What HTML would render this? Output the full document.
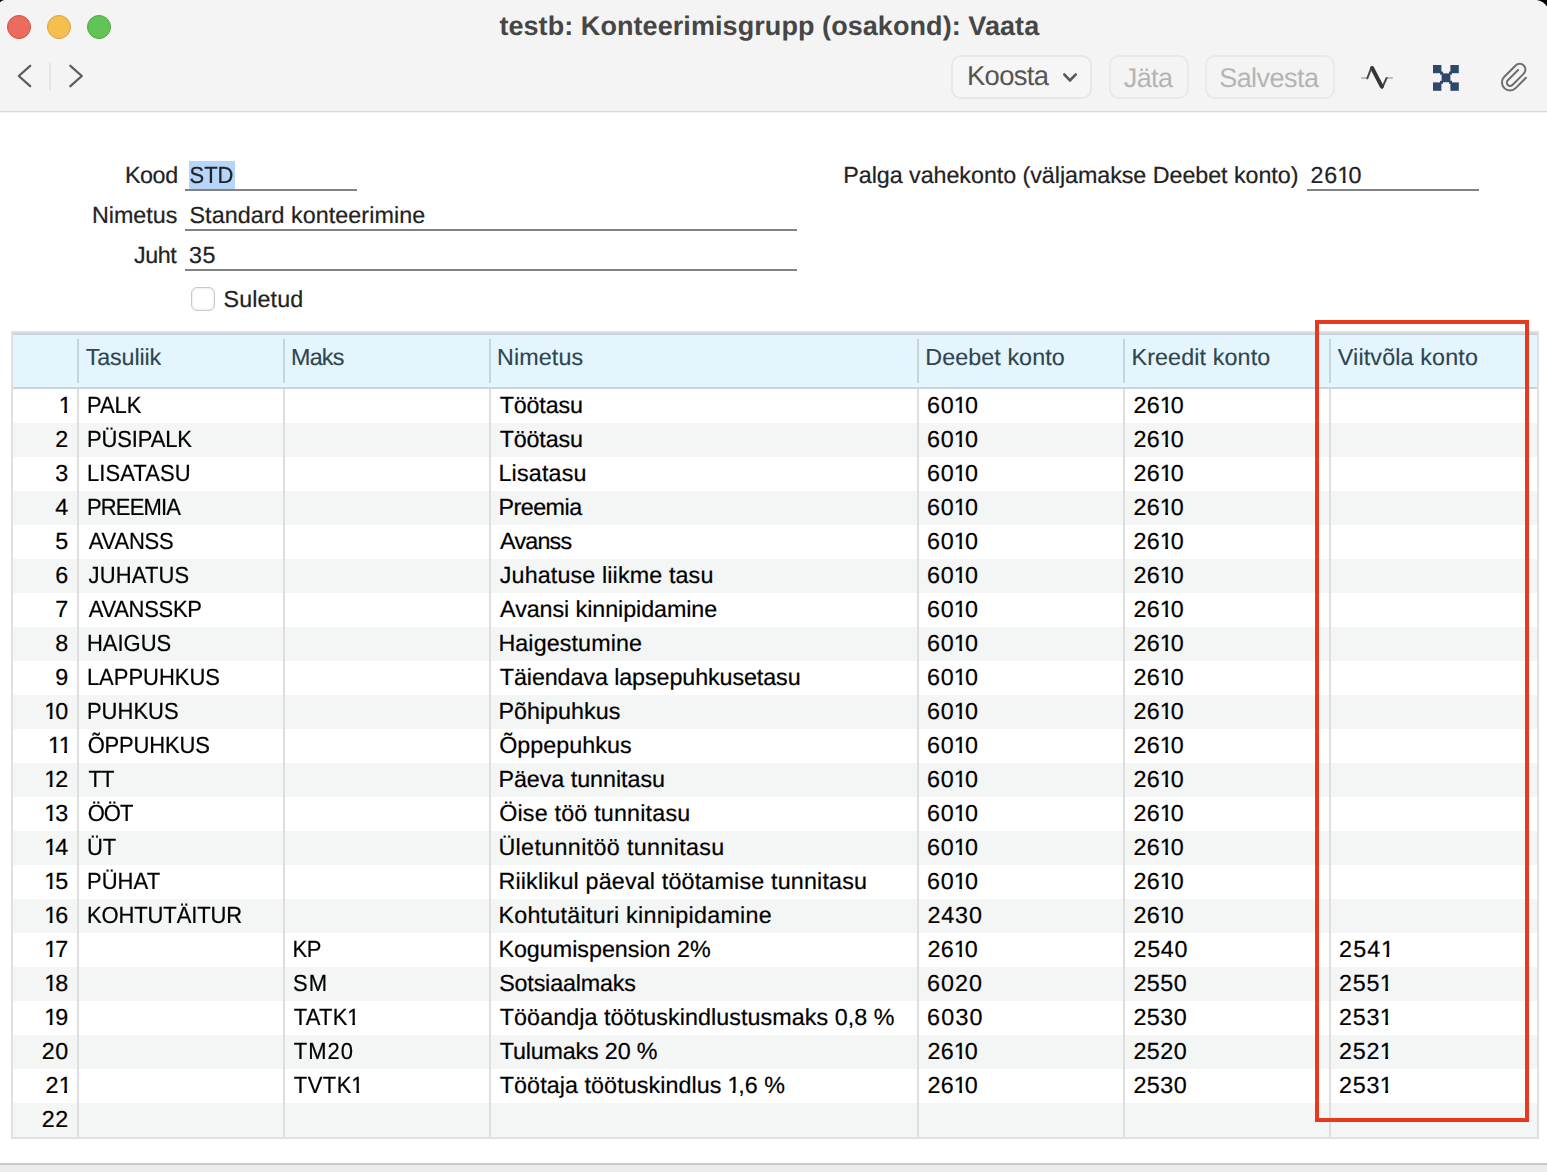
<!DOCTYPE html>
<html><head><meta charset="utf-8"><title>testb: Konteerimisgrupp (osakond): Vaata</title>
<style>
html,body{margin:0;padding:0;}
body{width:1547px;height:1172px;overflow:hidden;background:#fff;position:relative;font-family:"Liberation Sans",sans-serif;color:#000;text-rendering:geometricPrecision;}
div,span{box-sizing:border-box;}
.abs{position:absolute;}
.titlebar{position:absolute;left:0;top:0;width:1547px;height:111px;background:#f4f4f4;}
.tbline{position:absolute;left:0;top:111px;width:1547px;height:1px;background:#d9d9d9;}
.tbline2{position:absolute;left:0;top:112px;width:1547px;height:1px;background:#f4f4f4;}
.corner{position:absolute;top:0;}
.tl{position:absolute;top:15px;width:24px;height:24px;border-radius:50%;border:1px solid;}
.title{position:absolute;left:-0.7px;top:10.6px;width:1540px;text-align:center;font-weight:bold;font-size:27px;line-height:30px;color:#464646;white-space:nowrap;letter-spacing:0.07px;}
.btn{position:absolute;top:55px;height:43.5px;border:2px solid #e7e7e7;border-radius:10px;background:#f6f6f6;font-size:27.4px;line-height:39px;white-space:nowrap;letter-spacing:-0.65px;}
.btn span{position:absolute;top:-1.5px;}
.lbl{-webkit-text-stroke:0.2px #222;position:absolute;font-size:23.3px;line-height:31px;white-space:nowrap;color:#222;letter-spacing:0.12px;text-align:right;}
.val{-webkit-text-stroke:0.2px #222;position:absolute;font-size:23.3px;line-height:31px;white-space:nowrap;color:#222;letter-spacing:0.12px;}
.sy{font-size:22px !important;letter-spacing:0 !important;transform:scaleY(1.06);transform-origin:0 23px;}
.dg{letter-spacing:0.64px !important;}
.uline{position:absolute;height:2px;background:#828282;}
.tbl{position:absolute;left:0;top:0;width:1547px;height:1172px;}
.thead{position:absolute;left:13px;top:333px;width:1524px;height:56px;background:#e5f5fe;border-top:2px solid #c4d5dc;border-bottom:2px solid #c4d5dc;}
.th{-webkit-text-stroke:0.15px #2d4651;position:absolute;top:342px;font-size:23.3px;line-height:31px;color:#2d4651;white-space:nowrap;letter-spacing:0.25px;}
.row{position:absolute;left:13px;width:1524px;height:34px;background:#fff;font-size:22px;line-height:32px;white-space:nowrap;-webkit-text-stroke:0.2px #000;}
.row.alt{background:#f4f5f5;}
.row .n{position:absolute;top:1px;font-size:23.3px;line-height:31px;}
.row .c{position:absolute;top:1px;}
.row i,.dg i{font-style:normal;display:inline-block;margin:0 -2.5px 0 -0.5px;clip-path:polygon(0 0,100% 0,100% 20.9px,8.3px 20.9px,8.3px 100%,5.5px 100%,5.5px 20.9px,0 20.9px);}
.row .t{font-size:23.3px;line-height:31px;}
.row i.u1{margin:0 -2.3px 0 -0.5px;clip-path:polygon(0 0,100% 0,100% 21.1px,7.9px 21.1px,7.9px 100%,5.1px 100%,5.1px 21.1px,0 21.1px);}
.row .u{transform:scaleY(1.06);transform-origin:0 23.6px;}
.row .d{font-size:23.3px;line-height:31px;}
.vsep{position:absolute;top:389px;width:2px;height:748px;background:#dedede;}
.hsep{position:absolute;top:339px;width:2px;height:44px;background:#c4d5dc;}
.tborder{position:absolute;left:11px;top:331px;width:1528px;height:808px;border:2px solid #e0e0e0;}
.redbox{position:absolute;left:1315px;top:320px;width:214px;height:802px;border:4px solid #e8391f;}
.bottomline{position:absolute;left:0;top:1163px;width:1547px;height:2px;background:#c9c9c9;}
.bottombar{position:absolute;left:0;top:1165px;width:1547px;height:7px;background:#ebebeb;}

</style></head>
<body>
<div class="titlebar"></div>
<div class="tbline"></div><div class="tbline2"></div>
<svg class="corner" style="left:0" width="14" height="14" viewBox="0 0 14 14"><path d="M0 0H4.2C2 0.6 0.7 1.4 0 2.6Z" fill="#000"/></svg>
<svg class="corner" style="left:1533px" width="14" height="14" viewBox="0 0 14 14"><path d="M4 0H14V6.6C11.8 3 8.6 0.9 4 0Z" fill="#000"/></svg>
<div class="tl" style="left:7px;background:#ec6a5e;border-color:#d5503f"></div>
<div class="tl" style="left:47px;background:#f5bf4f;border-color:#d9a23a"></div>
<div class="tl" style="left:87px;background:#61c454;border-color:#4faa3d"></div>
<svg class="abs" style="left:10px;top:58px" width="90" height="40" viewBox="0 0 90 40">
 <path d="M20.2 7.8 L8.8 18 L20.2 28.2" fill="none" stroke="#5c5c5c" stroke-width="2.3" stroke-linecap="round" stroke-linejoin="round"/>
 <path d="M60.4 7.8 L71.8 18 L60.4 28.2" fill="none" stroke="#5c5c5c" stroke-width="2.3" stroke-linecap="round" stroke-linejoin="round"/>
 <rect x="39.3" y="5" width="1.6" height="27.5" fill="#e2e2e2"/>
</svg>
<div class="title" id="title">testb: Konteerimisgrupp (osakond): Vaata</div>

<div class="btn" style="left:951px;width:141px;color:#555"><span id="b1" style="left:14px">Koosta</span>
 <svg class="abs" style="left:108px;top:14px" width="20" height="14" viewBox="0 0 20 14"><path d="M3.4 3.6 L9 9.4 L14.6 3.6" fill="none" stroke="#5a5a5a" stroke-width="2.8" stroke-linecap="round" stroke-linejoin="round"/></svg>
</div>
<div class="btn" style="left:1109px;width:79.5px;color:#b4b4b4;background:#f4f4f4;border-color:#e9e9e9"><span id="b2" style="left:12.7px;top:2.3px;font-size:27px;letter-spacing:-0.55px">Jäta</span></div>
<div class="btn" style="left:1205px;width:129.5px;color:#b4b4b4;background:#f4f4f4;border-color:#e9e9e9"><span id="b3" style="left:12.2px;top:2.3px;font-size:27px;letter-spacing:-0.55px">Salvesta</span></div>

<!-- pulse icon -->
<svg class="abs" style="left:1355px;top:56px" width="44" height="44" viewBox="1355 56 44 44">
 <path d="M1361.2 78 H1367.6" fill="none" stroke="#b4b4b4" stroke-width="1.7"/>
 <path d="M1386.6 78 H1392.8" fill="none" stroke="#b4b4b4" stroke-width="1.7"/>
 <path d="M1367.3 78.3 L1371.6 67.2" fill="none" stroke="#4a4a4a" stroke-width="2" stroke-linecap="round"/>
 <path d="M1382.3 87.6 L1386.6 78" fill="none" stroke="#4a4a4a" stroke-width="2" stroke-linecap="round"/>
 <path d="M1372.1 68 L1381.8 86.6" fill="none" stroke="#363636" stroke-width="3.9" stroke-linecap="round"/>
</svg>
<!-- expand icon -->
<svg class="abs" style="left:1426px;top:58px;filter:blur(0.5px)" width="40" height="40" viewBox="1426 58 40 40">
 <g fill="#2e4869" stroke="none">
  <rect x="1433" y="65" width="8.4" height="8.2"/><rect x="1450.4" y="65" width="8.4" height="8.2"/>
  <rect x="1433" y="82.4" width="8.4" height="8.4"/><rect x="1450.4" y="82.4" width="8.4" height="8.4"/>
  <rect x="1441.6" y="73.4" width="8.8" height="8.8"/>
  <rect x="1440" y="71.6" width="3" height="3"/><rect x="1449" y="71.6" width="3" height="3"/>
  <rect x="1440" y="80.8" width="3" height="3"/><rect x="1449" y="80.8" width="3" height="3"/>
 </g>
</svg>
<!-- paperclip -->
<svg class="abs" style="left:1492px;top:56px" width="44" height="44" viewBox="1492 56 44 44">
 <g transform="translate(1513.5 77.5) rotate(45)" fill="none" stroke="#6e6e6e" stroke-width="2" stroke-linecap="round" stroke-linejoin="round">
  <path d="M9 -8.6 L9 6 A8 8 0 0 1 -7 6 L-7 -10 A5.75 5.75 0 0 1 4.5 -10 L4.5 6 A3.25 3.25 0 0 1 -2 6 L-2 -8.5"/>
 </g>
</svg>

<!-- form -->
<div class="lbl" id="l1" style="left:60px;top:160px;width:117.7px;letter-spacing:-0.4px">Kood</div>
<div class="abs" style="left:189px;top:161px;width:46px;height:28px;background:#b6d5fb"></div>
<div class="val sy" id="v1" style="left:189.5px;top:160px">STD</div>
<div class="uline" style="left:185px;top:189px;width:172px"></div>

<div class="lbl" id="l2" style="left:60px;top:200px;width:117.5px;letter-spacing:0.02px">Nimetus</div>
<div class="val" id="v2" style="left:189.5px;top:200px;letter-spacing:0.06px">Standard konteerimine</div>
<div class="uline" style="left:185px;top:229px;width:612px"></div>

<div class="lbl" id="l3" style="left:60px;top:240px;width:116.3px;letter-spacing:-0.45px">Juht</div>
<div class="val dg" id="v3" style="left:189px;top:240px">35</div>
<div class="uline" style="left:185px;top:269px;width:612px"></div>

<div class="abs" style="left:191px;top:287px;width:24px;height:24px;border:1px solid #c9c9c9;border-radius:6px;background:#fff;box-shadow:inset 0 0 2.5px rgba(0,0,0,0.16)"></div>
<div class="val" id="v4" style="left:223.5px;top:284px">Suletud</div>

<div class="val" id="l5" style="left:843.3px;top:160px;letter-spacing:-0.05px">Palga vahekonto (väljamakse Deebet konto)</div>
<div class="val dg" id="v5" style="left:1310.6px;top:160px">26<i>1</i>0</div>
<div class="uline" style="left:1307px;top:189px;width:172px"></div>
<div class="tbl">
<div class="thead"></div>
<div class="th" style="left:85.7px;letter-spacing:-0.13px">Tasuliik</div>
<div class="th" style="left:291px;letter-spacing:-0.75px">Maks</div>
<div class="th" style="left:497px;letter-spacing:0.12px">Nimetus</div>
<div class="th" style="left:925.3px;letter-spacing:0.07px">Deebet konto</div>
<div class="th" style="left:1131.5px;letter-spacing:0.12px">Kreedit konto</div>
<div class="th" style="left:1337.8px;letter-spacing:0.15px">Viitvõla konto</div>
<div class="row" style="top:389px"><span class="n" style="right:1467.2px;letter-spacing:0.64px"><i>1</i></span><span class="c u" style="left:73.9px;letter-spacing:-0.01px">PALK</span><span class="c t" style="left:486.8px;letter-spacing:-0.19px">Töötasu</span><span class="c d" style="left:914.1px;letter-spacing:0.64px">60<i>1</i>0</span><span class="c d" style="left:1120.4px;letter-spacing:0.47px">26<i>1</i>0</span></div>
<div class="row alt" style="top:423px"><span class="n" style="right:1468.1px;letter-spacing:0.64px">2</span><span class="c u" style="left:73.9px;letter-spacing:-0.12px">PÜSIPALK</span><span class="c t" style="left:486.8px;letter-spacing:-0.19px">Töötasu</span><span class="c d" style="left:914.1px;letter-spacing:0.64px">60<i>1</i>0</span><span class="c d" style="left:1120.4px;letter-spacing:0.47px">26<i>1</i>0</span></div>
<div class="row" style="top:457px"><span class="n" style="right:1468.1px;letter-spacing:0.64px">3</span><span class="c u" style="left:73.9px;letter-spacing:0.08px">LISATASU</span><span class="c t" style="left:485.4px;letter-spacing:0.19px">Lisatasu</span><span class="c d" style="left:914.1px;letter-spacing:0.64px">60<i>1</i>0</span><span class="c d" style="left:1120.4px;letter-spacing:0.47px">26<i>1</i>0</span></div>
<div class="row alt" style="top:491px"><span class="n" style="right:1468.1px;letter-spacing:0.64px">4</span><span class="c u" style="left:73.9px;letter-spacing:-0.83px">PREEMIA</span><span class="c t" style="left:485.4px;letter-spacing:-0.5px">Preemia</span><span class="c d" style="left:914.1px;letter-spacing:0.64px">60<i>1</i>0</span><span class="c d" style="left:1120.4px;letter-spacing:0.47px">26<i>1</i>0</span></div>
<div class="row" style="top:525px"><span class="n" style="right:1468.1px;letter-spacing:0.64px">5</span><span class="c u" style="left:75.7px;letter-spacing:-0.18px">AVANSS</span><span class="c t" style="left:487.1px;letter-spacing:-0.8px">Avanss</span><span class="c d" style="left:914.1px;letter-spacing:0.64px">60<i>1</i>0</span><span class="c d" style="left:1120.4px;letter-spacing:0.47px">26<i>1</i>0</span></div>
<div class="row alt" style="top:559px"><span class="n" style="right:1468.1px;letter-spacing:0.64px">6</span><span class="c u" style="left:75.5px;letter-spacing:0.16px">JUHATUS</span><span class="c t" style="left:486.8px;letter-spacing:0.13px">Juhatuse liikme tasu</span><span class="c d" style="left:914.1px;letter-spacing:0.64px">60<i>1</i>0</span><span class="c d" style="left:1120.4px;letter-spacing:0.47px">26<i>1</i>0</span></div>
<div class="row" style="top:593px"><span class="n" style="right:1468.1px;letter-spacing:0.64px">7</span><span class="c u" style="left:75.7px;letter-spacing:-0.29px">AVANSSKP</span><span class="c t" style="left:487.1px;letter-spacing:-0.07px">Avansi kinnipidamine</span><span class="c d" style="left:914.1px;letter-spacing:0.64px">60<i>1</i>0</span><span class="c d" style="left:1120.4px;letter-spacing:0.47px">26<i>1</i>0</span></div>
<div class="row alt" style="top:627px"><span class="n" style="right:1468.1px;letter-spacing:0.64px">8</span><span class="c u" style="left:73.9px;letter-spacing:0.01px">HAIGUS</span><span class="c t" style="left:485.4px;letter-spacing:0.1px">Haigestumine</span><span class="c d" style="left:914.1px;letter-spacing:0.64px">60<i>1</i>0</span><span class="c d" style="left:1120.4px;letter-spacing:0.47px">26<i>1</i>0</span></div>
<div class="row" style="top:661px"><span class="n" style="right:1468.1px;letter-spacing:0.64px">9</span><span class="c u" style="left:73.9px;letter-spacing:-0.02px">LAPPUHKUS</span><span class="c t" style="left:486.8px;letter-spacing:-0.09px">Täiendava lapsepuhkusetasu</span><span class="c d" style="left:914.1px;letter-spacing:0.64px">60<i>1</i>0</span><span class="c d" style="left:1120.4px;letter-spacing:0.47px">26<i>1</i>0</span></div>
<div class="row alt" style="top:695px"><span class="n" style="right:1468.1px;letter-spacing:0.64px"><i>1</i>0</span><span class="c u" style="left:73.9px;letter-spacing:0.02px">PUHKUS</span><span class="c t" style="left:485.4px;letter-spacing:0.02px">Põhipuhkus</span><span class="c d" style="left:914.1px;letter-spacing:0.64px">60<i>1</i>0</span><span class="c d" style="left:1120.4px;letter-spacing:0.47px">26<i>1</i>0</span></div>
<div class="row" style="top:729px"><span class="n" style="right:1467.2px;letter-spacing:0.64px"><i>1</i><i>1</i></span><span class="c u" style="left:74.7px;letter-spacing:-0.19px">ÕPPUHKUS</span><span class="c t" style="left:486.2px;letter-spacing:0.03px">Õppepuhkus</span><span class="c d" style="left:914.1px;letter-spacing:0.64px">60<i>1</i>0</span><span class="c d" style="left:1120.4px;letter-spacing:0.47px">26<i>1</i>0</span></div>
<div class="row alt" style="top:763px"><span class="n" style="right:1468.1px;letter-spacing:0.64px"><i>1</i>2</span><span class="c u" style="left:75.5px;letter-spacing:-0.91px">TT</span><span class="c t" style="left:485.4px;letter-spacing:-0.03px">Päeva tunnitasu</span><span class="c d" style="left:914.1px;letter-spacing:0.64px">60<i>1</i>0</span><span class="c d" style="left:1120.4px;letter-spacing:0.47px">26<i>1</i>0</span></div>
<div class="row" style="top:797px"><span class="n" style="right:1468.1px;letter-spacing:0.64px"><i>1</i>3</span><span class="c u" style="left:74.7px;letter-spacing:-0.97px">ÖÖT</span><span class="c t" style="left:486.2px;letter-spacing:0.19px">Öise töö tunnitasu</span><span class="c d" style="left:914.1px;letter-spacing:0.64px">60<i>1</i>0</span><span class="c d" style="left:1120.4px;letter-spacing:0.47px">26<i>1</i>0</span></div>
<div class="row alt" style="top:831px"><span class="n" style="right:1468.1px;letter-spacing:0.64px"><i>1</i>4</span><span class="c u" style="left:74.1px;letter-spacing:-0.27px">ÜT</span><span class="c t" style="left:485.4px;letter-spacing:0.35px">Ületunnitöö tunnitasu</span><span class="c d" style="left:914.1px;letter-spacing:0.64px">60<i>1</i>0</span><span class="c d" style="left:1120.4px;letter-spacing:0.47px">26<i>1</i>0</span></div>
<div class="row" style="top:865px"><span class="n" style="right:1468.1px;letter-spacing:0.64px"><i>1</i>5</span><span class="c u" style="left:73.9px;letter-spacing:0.08px">PÜHAT</span><span class="c t" style="left:485.4px;letter-spacing:0.17px">Riiklikul päeval töötamise tunnitasu</span><span class="c d" style="left:914.1px;letter-spacing:0.64px">60<i>1</i>0</span><span class="c d" style="left:1120.4px;letter-spacing:0.47px">26<i>1</i>0</span></div>
<div class="row alt" style="top:899px"><span class="n" style="right:1468.1px;letter-spacing:0.64px"><i>1</i>6</span><span class="c u" style="left:73.9px;letter-spacing:-0.11px">KOHTUTÄITUR</span><span class="c t" style="left:485.4px;letter-spacing:0.26px">Kohtutäituri kinnipidamine</span><span class="c d" style="left:914.4px;letter-spacing:0.91px">2430</span><span class="c d" style="left:1120.4px;letter-spacing:0.47px">26<i>1</i>0</span></div>
<div class="row" style="top:933px"><span class="n" style="right:1468.1px;letter-spacing:0.64px"><i>1</i>7</span><span class="c u" style="left:279.6px;letter-spacing:-0.58px">KP</span><span class="c t" style="left:485.4px;letter-spacing:-0.01px">Kogumispension 2%</span><span class="c d" style="left:914.4px;letter-spacing:0.47px">26<i>1</i>0</span><span class="c d" style="left:1120.4px;letter-spacing:0.78px">2540</span><span class="c d" style="left:1326.0px;letter-spacing:1.17px">254<i>1</i></span></div>
<div class="row alt" style="top:967px"><span class="n" style="right:1468.1px;letter-spacing:0.64px"><i>1</i>8</span><span class="c u" style="left:280.1px;letter-spacing:0.9px">SM</span><span class="c t" style="left:486.2px;letter-spacing:-0.17px">Sotsiaalmaks</span><span class="c d" style="left:914.1px;letter-spacing:1.03px">6020</span><span class="c d" style="left:1120.4px;letter-spacing:0.47px">2550</span><span class="c d" style="left:1326.0px;letter-spacing:0.8px">255<i>1</i></span></div>
<div class="row" style="top:1001px"><span class="n" style="right:1468.1px;letter-spacing:0.64px"><i>1</i>9</span><span class="c u" style="left:280.8px;letter-spacing:0.22px">TATK<i class="u1">1</i></span><span class="c t" style="left:486.8px;letter-spacing:0.07px">Tööandja töötuskindlustusmaks 0,8 %</span><span class="c d" style="left:914.1px;letter-spacing:1.19px">6030</span><span class="c d" style="left:1120.4px;letter-spacing:0.47px">2530</span><span class="c d" style="left:1326.0px;letter-spacing:0.8px">253<i>1</i></span></div>
<div class="row alt" style="top:1035px"><span class="n" style="right:1468.1px;letter-spacing:0.64px">20</span><span class="c u" style="left:280.8px;letter-spacing:1.01px">TM20</span><span class="c t" style="left:486.8px;letter-spacing:-0.17px">Tulumaks 20 %</span><span class="c d" style="left:914.4px;letter-spacing:0.47px">26<i>1</i>0</span><span class="c d" style="left:1120.4px;letter-spacing:0.47px">2520</span><span class="c d" style="left:1326.0px;letter-spacing:0.8px">252<i>1</i></span></div>
<div class="row" style="top:1069px"><span class="n" style="right:1467.2px;letter-spacing:0.64px">2<i>1</i></span><span class="c u" style="left:280.8px;letter-spacing:0.43px">TVTK<i class="u1">1</i></span><span class="c t" style="left:486.8px;letter-spacing:0.07px">Töötaja töötuskindlus <i class="u1">1</i>,6 %</span><span class="c d" style="left:914.4px;letter-spacing:0.47px">26<i>1</i>0</span><span class="c d" style="left:1120.4px;letter-spacing:0.47px">2530</span><span class="c d" style="left:1326.0px;letter-spacing:0.8px">253<i>1</i></span></div>
<div class="row alt" style="top:1103px"><span class="n" style="right:1468.1px;letter-spacing:0.64px">22</span></div>
<div class="vsep" style="left:77px"></div><div class="hsep" style="left:77px"></div>
<div class="vsep" style="left:283px"></div><div class="hsep" style="left:283px"></div>
<div class="vsep" style="left:489px"></div><div class="hsep" style="left:489px"></div>
<div class="vsep" style="left:917px"></div><div class="hsep" style="left:917px"></div>
<div class="vsep" style="left:1123px"></div><div class="hsep" style="left:1123px"></div>
<div class="vsep" style="left:1329px"></div><div class="hsep" style="left:1329px"></div>
<div class="tborder"></div>
</div>
<div class="redbox"></div>
<div class="bottomline"></div><div class="bottombar"></div>
</body></html>
